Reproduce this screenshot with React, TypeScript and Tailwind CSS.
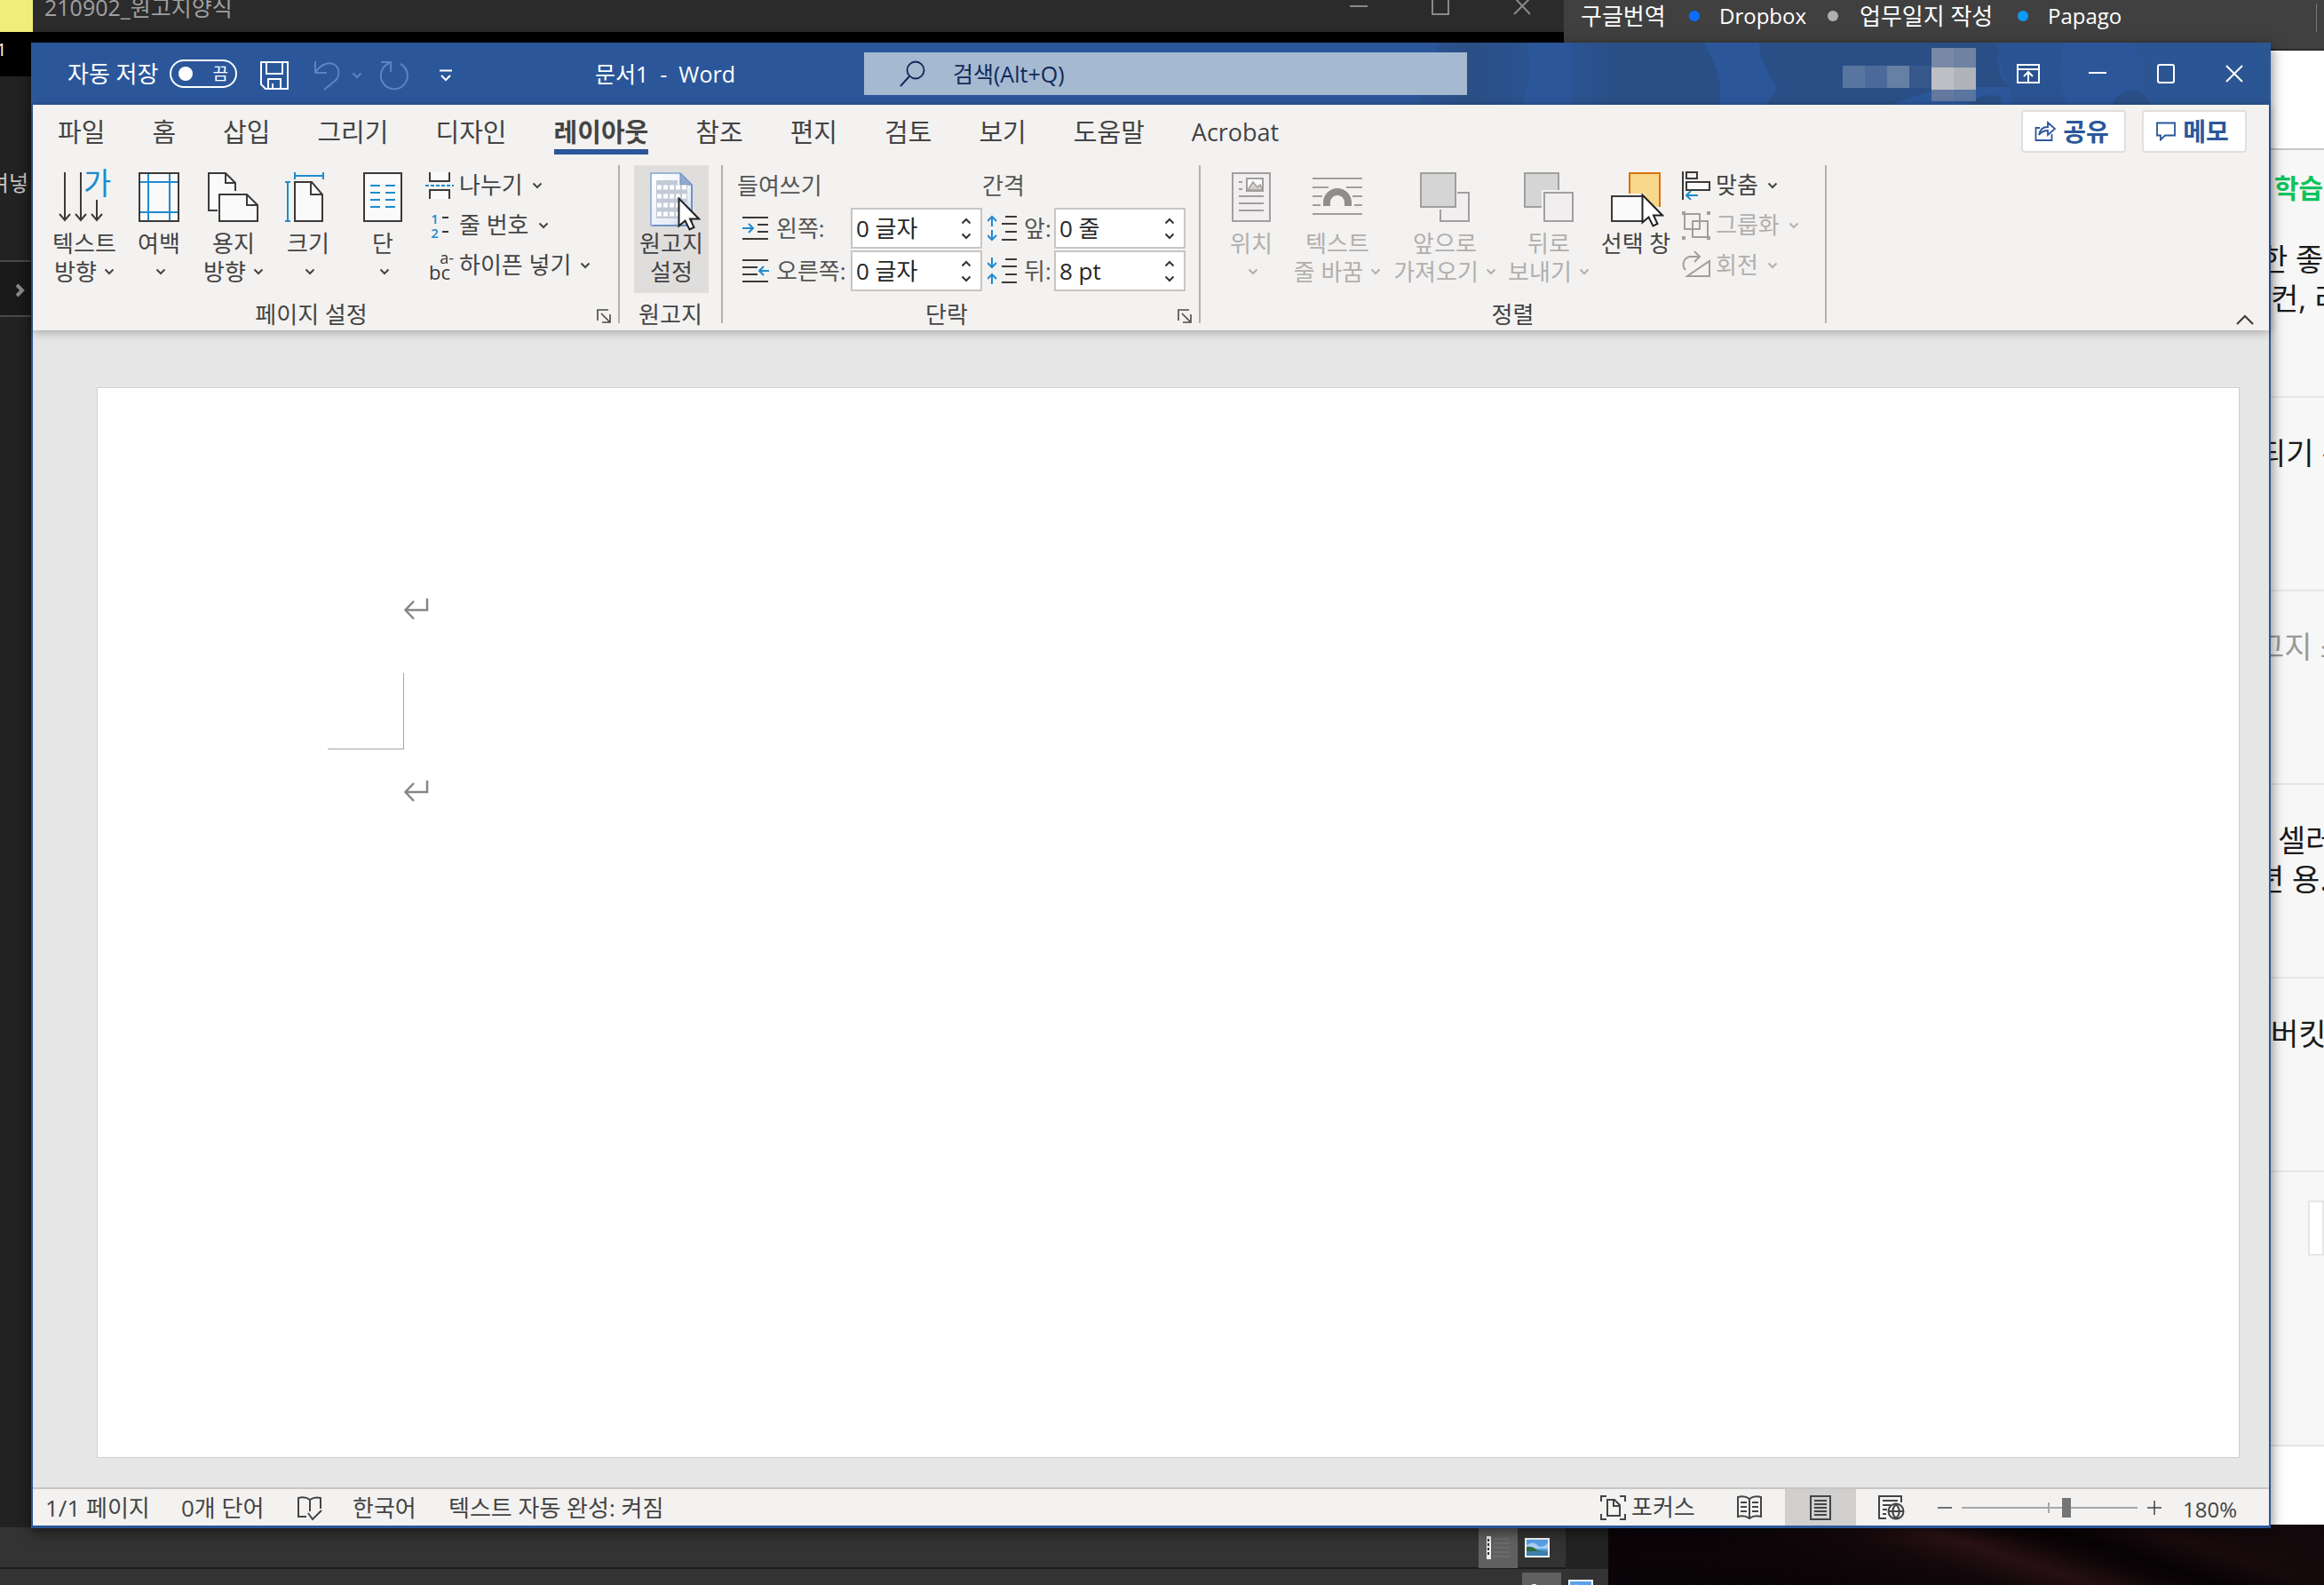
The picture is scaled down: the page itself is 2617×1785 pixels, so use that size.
import React from "react";

type IconProps = { w: number; h: number; className?: string; children: React.ReactNode };

function Icon({ w, h, className = "", children }: IconProps) {
  return (
    <svg width={w} height={h} viewBox={`0 0 ${w} ${h}`} fill="none" className={`shrink-0 ${className}`} aria-hidden="true">
      {children}
    </svg>
  );
}

const DARK = "#3b3a39";
const BLUE = "#1e8bcd";
const GREY = "#a19f9d";

function Chevron({ up = false }: { up?: boolean }) {
  return (
    <Icon w={12} h={8}>
      <path d={up ? "M1.5 6.5 6 2l4.5 4.5" : "M1.5 1.5 6 6l4.5-4.5"} stroke="currentColor" strokeWidth="2" />
    </Icon>
  );
}

function Launcher({ label }: { label: string }) {
  return (
    <button aria-label={label} className="flex w-8 justify-center pt-1">
      <Icon w={16} h={16}>
        <path d="M1 13V1h12M5 5l9 9M15 6v9H6" stroke="#4a4948" strokeWidth="1.6" />
      </Icon>
    </button>
  );
}

function TextDirectionIcon() {
  return (
    <div className="relative flex">
      <Icon w={58} h={56}>
        <path d="M7 0v54M25 0v54M43 31v23M1 47l6 7 6-7M19 47l6 7 6-7M37 47l6 7 6-7" stroke={DARK} strokeWidth="2" />
      </Icon>
      <span className="absolute -top-1 left-7 text-[34px] leading-8 text-[#1e8bcd]">가</span>
    </div>
  );
}

function MarginsIcon() {
  return (
    <Icon w={46} h={56}>
      <rect x="1" y="1" width="44" height="54" fill="#fafafa" stroke={DARK} strokeWidth="2" />
      <path d="M11 2v52M35 2v52M2 11h42M2 45h42" stroke={BLUE} strokeWidth="2" />
    </Icon>
  );
}

function OrientationIcon() {
  return (
    <Icon w={58} h={56}>
      <path d="M11 43H1V1h19l11 11v12H13v19z" fill="#fafafa" />
      <path d="M11 43H1V1h19l11 11v9M20 1v11h11" stroke={DARK} strokeWidth="2" />
      <path d="M13 25h31l12 12v18H13z" fill="#fafafa" stroke={DARK} strokeWidth="2" />
      <path d="M44 25v12h12" stroke={DARK} strokeWidth="2" />
    </Icon>
  );
}

function SizeIcon() {
  return (
    <Icon w={52} h={56}>
      <path d="M11 11h19l12 14v30H11z" fill="#fafafa" stroke={DARK} strokeWidth="2" />
      <path d="M29 11v14h13" stroke={DARK} strokeWidth="2" />
      <path d="M11 4h32M11 0v8M43 0v8M3 11v44M0 11h6M0 55h6" stroke={BLUE} strokeWidth="2" />
    </Icon>
  );
}

function ColumnsIcon() {
  return (
    <Icon w={44} h={56}>
      <rect x="1" y="1" width="42" height="54" fill="#fafafa" stroke={DARK} strokeWidth="2" />
      <path d="M8 15h11M25 15h11M8 23h11M25 23h11M8 31h11M25 31h11M8 39h11M25 39h11" stroke={BLUE} strokeWidth="2" />
    </Icon>
  );
}

function BreaksIcon() {
  return (
    <Icon w={32} h={32}>
      <path d="M5 1v10h22V1M5 31V21h22v10" fill="#fafafa" stroke={DARK} strokeWidth="2" />
      <path d="M0 16h32" stroke={BLUE} strokeWidth="2" strokeDasharray="4 2" />
    </Icon>
  );
}

function LineNumbersIcon() {
  return (
    <span className="flex w-8 items-center justify-center gap-1" aria-hidden="true">
      <span className="flex flex-col text-[15px] leading-4 font-semibold text-[#1e8bcd]">
        <span>1</span>
        <span>2</span>
      </span>
      <Icon w={7} h={32}>
        <path d="M0 7h7M0 23h7" stroke={DARK} strokeWidth="2" />
      </Icon>
    </span>
  );
}

function HyphenIcon() {
  return (
    <span className="flex w-8 flex-col text-[22px] leading-[18px] text-[#3b3a39]" aria-hidden="true">
      <span className="self-end text-[18px] leading-[14px]">a-</span>
      <span>bc</span>
    </span>
  );
}

function Pointer() {
  return (
    <Icon w={26} h={38}>
      <path d="M1.500 1.500v31l7-6 5 10 5-2.500-4.500-9.500h10z" fill="#fff" stroke="#222" strokeWidth="2" />
    </Icon>
  );
}

function ManuscriptIcon() {
  return (
    <div className="relative flex">
      <Icon w={50} h={62}>
        <defs>
          <linearGradient id="sheet" x1="0" y1="0" x2="1" y2="1">
            <stop offset="0" stopColor="#ffffff" />
            <stop offset="0.7" stopColor="#e8eef7" />
            <stop offset="1" stopColor="#a9c0e0" />
          </linearGradient>
        </defs>
        <path d="M2 1h33l13 13v46H2z" fill="url(#sheet)" stroke="#9db6d8" strokeWidth="2" />
        <path d="M35 1v13h13z" fill="#8fabd1" stroke="#6f8dba" />
        <path d="M48 14v46H4" stroke="#6f93c5" strokeWidth="2" />
        <path d="M8 9h24v5h11v38H8z" fill="#c3cad6" />
        <path d="M9 17h33M9 27h33M9 37h33M9 47h33" stroke="#fff" strokeWidth="5" strokeDasharray="5 2" />
      </Icon>
      <span className="absolute top-7 left-8">
        <Pointer />
      </span>
    </div>
  );
}

function PositionIcon() {
  return (
    <Icon w={44} h={56}>
      <rect x="1" y="1" width="42" height="54" fill="#f0eeef" stroke={GREY} strokeWidth="2" />
      <rect x="17" y="7" width="18" height="14" fill="#fafafa" stroke={GREY} strokeWidth="2" />
      <path d="M18 20l6-9 5 6 3-3 3 6z" fill="#d2d0ce" stroke={GREY} strokeWidth="1.500" />
      <path d="M8 11h4M8 19h4M8 27h28M8 35h28M8 43h28" stroke={GREY} strokeWidth="2" />
    </Icon>
  );
}

function WrapIcon() {
  return (
    <Icon w={56} h={56}>
      <path d="M0 7h56M0 17h18M38 17h18M0 27h11M45 27h11M0 37h9M47 37h9M0 47h56" stroke={GREY} strokeWidth="2" />
      <path d="M16 38v-4a12 12 0 0 1 24 0v4" stroke="#8f8e8d" strokeWidth="8" />
    </Icon>
  );
}

function ForwardIcon() {
  return (
    <Icon w={56} h={56}>
      <path d="M42 23h13v32H23V42" fill="#f0eeef" stroke={GREY} strokeWidth="2" />
      <rect x="1" y="1" width="39" height="38" fill="#d6d5d6" stroke={GREY} strokeWidth="2" />
    </Icon>
  );
}

function BackwardIcon() {
  return (
    <Icon w={56} h={56}>
      <path d="M39 20V1H1v38h19V20z" fill="#d6d5d6" />
      <path d="M39 20V1H1v38h19" stroke={GREY} strokeWidth="2" />
      <rect x="23" y="23" width="32" height="32" fill="#f0eeef" stroke={GREY} strokeWidth="2" />
    </Icon>
  );
}

function SelectionPaneIcon() {
  return (
    <div className="relative flex">
      <Icon w={56} h={56}>
        <path d="M21 24V1h34v38H38V24z" fill="#f8d98b" />
        <path d="M21 24V1h34v38" stroke="#d8730c" strokeWidth="2" />
        <rect x="1" y="27" width="35" height="28" fill="#fafafa" stroke={DARK} strokeWidth="2" />
      </Icon>
      <span className="absolute top-6 left-[34px]">
        <Pointer />
      </span>
    </div>
  );
}

function AlignIcon() {
  return (
    <Icon w={32} h={32}>
      <path d="M1 0v32" stroke={DARK} strokeWidth="2" />
      <rect x="5" y="1" width="12" height="7" stroke={DARK} strokeWidth="2" />
      <rect x="5" y="12" width="26" height="9" fill="#fafafa" stroke={DARK} strokeWidth="2" />
      <path d="M18 27H5M10 22l-5 5 5 5" stroke={BLUE} strokeWidth="2" />
    </Icon>
  );
}

function GroupIcon() {
  return (
    <Icon w={32} h={32}>
      <path d="M3 5V3h17v17H3zM12 11h17v18H12z" stroke={GREY} strokeWidth="2" />
      <path d="M0 0h4v4H0zM28 0h4v4h-4zM0 28h4v4H0zM28 28h4v4h-4z" fill={GREY} />
    </Icon>
  );
}

function RotateIcon() {
  return (
    <Icon w={32} h={32}>
      <path d="M31 11v17H6z" stroke={GREY} strokeWidth="2" />
      <path d="M4 21a9 9 0 0 1 5-15h10M14 0l6 6-6 6" stroke={GREY} strokeWidth="2" />
    </Icon>
  );
}

function IndentIcon({ right = false }: { right?: boolean }) {
  return (
    <Icon w={30} h={28}>
      <path d={right ? "M0 2h29M0 10h17M0 18h17M0 26h29" : "M0 2h29M17 10h12M17 18h12M0 26h29"} stroke={DARK} strokeWidth="2" />
      <path d={right ? "M30 14H19M24 9l-5 5 5 5" : "M0 14h12M7 9l5 5-5 5"} stroke={BLUE} strokeWidth="2" />
    </Icon>
  );
}

function SpacingIcon({ after = false }: { after?: boolean }) {
  return (
    <Icon w={33} h={30}>
      <path d="M20 2h13M16 10h17M20 19h13M16 28h17" stroke={DARK} strokeWidth="2" />
      <path
        d={after ? "M5 0v11M0 6l5 5 5-5M5 30V19M0 24l5-5 5 5" : "M5 13V2M0 7l5-5 5 5M5 17v11M0 23l5 5 5-5"}
        stroke={BLUE}
        strokeWidth="2"
      />
    </Icon>
  );
}

function Divider() {
  return <div className="mt-1 h-[178px] w-0.5 bg-[#b3b1b0]" />;
}

type BigProps = { icon: React.ReactNode; lines: [string, string?]; arrow?: boolean; width: string; disabled?: boolean; active?: boolean };

function BigButton({ icon, lines, arrow = true, width, disabled = false, active = false }: BigProps) {
  return (
    <button
      disabled={disabled}
      className={`flex h-36 flex-col items-center pt-2 leading-8 whitespace-nowrap ${width} ${active ? "bg-[#e0dedd]" : ""} ${disabled ? "text-[#b1afad]" : "text-[#444]"}`}
    >
      <span className="mb-2 flex h-14 items-start">{icon}</span>
      <span>{lines[0]}</span>
      <span className={`flex h-8 items-center gap-2 ${lines[1] ? "" : "pl-1"}`}>
        {lines[1]}
        {arrow && <Chevron />}
      </span>
    </button>
  );
}

function SmallButton({ icon, label, disabled = false }: { icon: React.ReactNode; label: string; disabled?: boolean }) {
  return (
    <button
      disabled={disabled}
      className={`flex h-[45px] items-center gap-1.5 whitespace-nowrap ${disabled ? "text-[#b1afad]" : "text-[#444]"}`}
    >
      {icon}
      <span className="mr-1">{label}</span>
      <Chevron />
    </button>
  );
}

function Group({ label, launcher, width, children }: { label: string; launcher?: string; width: string; children: React.ReactNode }) {
  return (
    <section className={`flex flex-col pt-1 ${width}`}>
      <div className="flex h-[150px] pl-4">{children}</div>
      <div className="flex h-9 items-center">
        <h2 className="flex-1 text-center text-[#444]">{label}</h2>
        {launcher && <Launcher label={launcher} />}
      </div>
    </section>
  );
}

function Spinner({ id, label, value, icon }: { id: string; label: string; value: string; icon: React.ReactNode }) {
  return (
    <div className="flex h-[46px] items-center pl-1.5">
      {icon}
      <label htmlFor={id} className="ml-2 flex-1 whitespace-nowrap text-[#555]">
        {label}
      </label>
      <div className="flex h-[46px] w-[148px] shrink-0 border-2 border-[#c8c6c4] bg-white pl-1">
        <input id={id} defaultValue={value} className="w-0 flex-1 bg-transparent text-[26px] text-[#262626] outline-none" />
        <div className="flex w-8 flex-col items-center justify-around py-1 text-[#333]">
          <button aria-label={`${label} 늘리기`}>
            <Chevron up />
          </button>
          <button aria-label={`${label} 줄이기`}>
            <Chevron />
          </button>
        </div>
      </div>
    </div>
  );
}

function TitleBar() {
  return (
    <header className="relative flex h-[70px] shrink-0 items-center overflow-hidden bg-[#2b579a] text-[25px] text-white">
      <svg className="absolute top-0 right-0" width="1000" height="70" viewBox="0 0 1000 70" aria-hidden="true">
        <defs>
          <linearGradient id="fade" x1="0" x2="1">
            <stop offset="0" stopColor="#2a4f86" stopOpacity="0.3" />
            <stop offset="0.45" stopColor="#2a4f86" />
            <stop offset="1" stopColor="#2a4f86" stopOpacity="0.5" />
          </linearGradient>
          <linearGradient id="edge" x1="0" x2="1">
            <stop offset="0" stopColor="#2a4f86" stopOpacity="0.4" />
            <stop offset="0.3" stopColor="#2a4f86" />
            <stop offset="1" stopColor="#2a4f86" />
          </linearGradient>
        </defs>
        <path d="M40 70 66 0H166L168 35 160 70z" fill="url(#fade)" />
        <path d="M215 70V0h148c14 22 22 40 18 70z" fill="url(#edge)" />
        <path d="M426 0c0 18 8 34 21 51l-14 19h140l60-20h74c-14-14-14-34-10-50z" fill="#2a4f86" />
        <path d="M660 70c12-10 20-12 38-10v10z" fill="#2a4f86" />
        <path d="M692 0h78c-6 20-8 44 2 70h-60z" fill="#2a5391" />
        <path d="M846 0c14 22 14 46 4 70h150V0z" fill="#2b5593" />
        <circle cx="845" cy="76" r="22" fill="#2a4f86" />
      </svg>
      <div className="relative flex w-full items-center">
        <div className="flex w-[633px] shrink-0 items-center pl-[39px]">
          <label htmlFor="autosave" className="w-[115px] text-[26px] whitespace-nowrap">
            자동 저장
          </label>
          <button id="autosave" role="switch" aria-checked="false" className="flex h-8 w-[76px] items-center justify-between rounded-full border-2 border-white px-2">
            <span className="size-4 rounded-full bg-white" />
            <span className="text-[19px] leading-5">끔</span>
          </button>
          <button aria-label="저장" className="mt-1 ml-[26px]">
            <Icon w={32} h={32}>
              <path d="M1 1h30v30H6l-5-5zM7 1v13h18V1M9 31V20h14v11M14 31v-6" stroke="#fff" strokeWidth="2" />
            </Icon>
          </button>
          <button aria-label="실행 취소" disabled className="mt-1 ml-7 flex items-center gap-3 text-[#5c84c2]">
            <Icon w={31} h={34}>
              <path d="M2 1v13h13M2 14C8 4 18 1 24 5s6 14-1 19L12 33" stroke="currentColor" strokeWidth="2" />
            </Icon>
            <Chevron />
          </button>
          <button aria-label="다시 실행" disabled className="mt-1 ml-5 text-[#5c84c2]">
            <Icon w={32} h={34}>
              <path d="M1 2h11v11M11 3A15 15 0 1 0 23 4" stroke="currentColor" strokeWidth="2" />
            </Icon>
          </button>
          <button aria-label="빠른 실행 도구 모음 사용자 지정" className="mt-1 ml-[34px]">
            <Icon w={16} h={14}>
              <path d="M1 1.500h14M3 7l5 5 5-5" stroke="#fff" strokeWidth="2" />
            </Icon>
          </button>
        </div>
        <h1 className="w-[303px] shrink-0 pt-0.5 whitespace-pre">문서1  -  Word</h1>
        <div className="flex h-12 w-[679px] shrink-0 items-center bg-[#a5b9d1] pl-10 text-[#10295a]">
          <Icon w={30} h={30}>
            <circle cx="18" cy="11" r="9.500" stroke="#10295a" strokeWidth="1.800" />
            <path d="M11 18 1 29" stroke="#10295a" strokeWidth="2" />
          </Icon>
          <input aria-label="검색" placeholder="검색(Alt+Q)" className="ml-[30px] flex-1 bg-transparent pt-0.5 outline-none placeholder:text-[#10295a]" />
        </div>
        <div className="ml-auto flex items-center">
          <div className="flex items-center pt-0.5" aria-hidden="true">
            <span className="mt-1 h-[25px] w-[25px] bg-[#57759f]" />
            <span className="mt-1 h-[25px] w-[25px] bg-[#4b6a99]" />
            <span className="mt-1 h-[25px] w-[25px] bg-[#677fa5]" />
            <span className="mt-1 h-[25px] w-[25px] bg-[#36588c]" />
            <span className="grid h-[60px] grid-cols-[25px_25px] grid-rows-[22px_25px_13px]">
              <span className="bg-[#7888a7]" />
              <span className="bg-[#6e82a3]" />
              <span className="bg-[#bfc0c5]" />
              <span className="bg-[#b0b3ba]" />
              <span className="bg-[#64799f]" />
              <span className="bg-[#5a769f]" />
            </span>
          </div>
          <button aria-label="리본 메뉴 표시 옵션" className="ml-[46px]">
            <Icon w={26} h={22}>
              <path d="M1 1h24v20H1zM1 6h24M13 21V9M8 14l5-5 5 5" stroke="#fff" strokeWidth="2" />
            </Icon>
          </button>
          <button aria-label="최소화" className="ml-[55px]">
            <Icon w={20} h={22}>
              <path d="M0 10h20" stroke="#fff" strokeWidth="2" />
            </Icon>
          </button>
          <button aria-label="최대화" className="ml-[57px]">
            <Icon w={20} h={22}>
              <rect x="1" y="1" width="18" height="20" rx="2" stroke="#fff" strokeWidth="2" />
            </Icon>
          </button>
          <button aria-label="닫기" className="mr-[29px] ml-[57px]">
            <Icon w={20} h={22}>
              <path d="M1 2l18 18M19 2 1 20" stroke="#fff" strokeWidth="2" />
            </Icon>
          </button>
        </div>
      </div>
    </header>
  );
}

const TABS = ["파일", "홈", "삽입", "그리기", "디자인", "레이아웃", "참조", "편지", "검토", "보기", "도움말", "Acrobat"];

function Tabs() {
  return (
    <div className="flex h-16 items-start">
      <nav className="flex gap-[53px] pl-7 text-[29px] text-[#444]">
        {TABS.map((t) => (
          <button
            key={t}
            className={
              t === "레이아웃"
                ? "flex h-14 items-center border-b-6 border-[#2b579a] pt-3 font-bold whitespace-nowrap"
                : t === "Acrobat"
                  ? "flex h-14 items-center border-b-6 border-transparent pt-3 text-[27px] whitespace-nowrap"
                  : "flex h-14 items-center border-b-6 border-transparent pt-3 whitespace-nowrap"
            }
          >
            {t}
          </button>
        ))}
      </nav>
      <div className="mt-1.5 mr-[25px] ml-auto flex gap-[18px] text-[28px] font-bold text-[#2b579a]">
        <button className="flex h-12 w-[118px] items-center justify-center gap-2 rounded-sm border-2 border-[#e1dfdd] bg-white pr-1">
          <Icon w={24} h={24}>
            <path d="M6 8H1.500v14h18v-7M5 16c1-7 6-9 10-9V2l8 7-8 7v-5c-4 0-7 1-10 5z" stroke="#2b579a" strokeWidth="1.800" />
          </Icon>
          공유
        </button>
        <button className="flex h-12 w-[118px] items-center justify-center gap-2 rounded-sm border-2 border-[#e1dfdd] bg-white pr-1">
          <Icon w={22} h={22}>
            <path d="M1 1.500h20v14H10l-5 5v-5H1z" stroke="#2b579a" strokeWidth="1.800" />
          </Icon>
          메모
        </button>
      </div>
    </div>
  );
}

function Ribbon() {
  return (
    <div className="relative z-10 shrink-0 bg-[#f3f2f1] shadow-[0_2px_10px_rgba(0,0,0,0.3)]">
      <Tabs />
      <div className="flex h-[190px] text-[26px]">
        <Group label="페이지 설정" launcher="페이지 설정 대화 상자" width="w-[659px]">
          <BigButton width="w-[84px]" icon={<TextDirectionIcon />} lines={["텍스트", "방향"]} />
          <BigButton width="w-[84px]" icon={<MarginsIcon />} lines={["여백"]} />
          <BigButton width="w-[84px]" icon={<OrientationIcon />} lines={["용지", "방향"]} />
          <BigButton width="w-[84px]" icon={<SizeIcon />} lines={["크기"]} />
          <BigButton width="w-[84px]" icon={<ColumnsIcon />} lines={["단"]} />
          <div className="flex flex-col items-start pl-1.5">
            <SmallButton icon={<BreaksIcon />} label="나누기" />
            <SmallButton icon={<LineNumbersIcon />} label="줄 번호" />
            <SmallButton icon={<HyphenIcon />} label="하이픈 넣기" />
          </div>
        </Group>
        <Divider />
        <Group label="원고지" width="w-[114px]">
          <BigButton width="w-[84px]" active arrow={false} icon={<ManuscriptIcon />} lines={["원고지", "설정"]} />
        </Group>
        <Divider />
        <Group label="단락" launcher="단락 대화 상자" width="w-[536px]">
          <div className="flex w-[276px] flex-col gap-0.5">
            <h3 className="flex h-[46px] items-center text-[#555]">들여쓰기</h3>
            <Spinner id="indent-left" label="왼쪽:" value="0 글자" icon={<IndentIcon />} />
            <Spinner id="indent-right" label="오른쪽:" value="0 글자" icon={<IndentIcon right />} />
          </div>
          <div className="flex w-[229px] flex-col gap-0.5">
            <h3 className="flex h-[46px] items-center text-[#555]">간격</h3>
            <Spinner id="space-before" label="앞:" value="0 줄" icon={<SpacingIcon />} />
            <Spinner id="space-after" label="뒤:" value="8 pt" icon={<SpacingIcon after />} />
          </div>
        </Group>
        <Divider />
        <Group label="정렬" width="w-[703px]">
          <BigButton disabled width="w-[82px]" icon={<PositionIcon />} lines={["위치"]} />
          <BigButton disabled width="w-[112px]" icon={<WrapIcon />} lines={["텍스트", "줄 바꿈"]} />
          <BigButton disabled width="w-[130px]" icon={<ForwardIcon />} lines={["앞으로", "가져오기"]} />
          <BigButton disabled width="w-[104px]" icon={<BackwardIcon />} lines={["뒤로", "보내기"]} />
          <BigButton width="w-[92px]" arrow={false} icon={<SelectionPaneIcon />} lines={["선택 창"]} />
          <div className="flex flex-col items-start pl-1.5">
            <SmallButton icon={<AlignIcon />} label="맞춤" />
            <SmallButton disabled icon={<GroupIcon />} label="그룹화" />
            <SmallButton disabled icon={<RotateIcon />} label="회전" />
          </div>
        </Group>
        <Divider />
        <button aria-label="리본 메뉴 축소" className="mt-auto mr-[17px] mb-1.5 ml-auto">
          <Icon w={20} h={12}>
            <path d="M1 11l9-9 9 9" stroke={DARK} strokeWidth="2" />
          </Icon>
        </button>
      </div>
    </div>
  );
}

function ReturnMark() {
  return (
    <Icon w={28} h={26} className="ml-[86px]">
      <path d="M26 1v13H2M11 4 1.500 14l9.500 10" stroke="#868686" strokeWidth="2.500" />
    </Icon>
  );
}

function DocumentArea() {
  return (
    <main className="flex min-h-0 flex-1 bg-[#e6e6e6] pt-16 pr-[33px] pb-[33px] pl-[72px]">
      <article className="flex flex-1 flex-col items-start border border-[#d0d0d0] bg-white pt-[236px] pl-[259px]">
        <ReturnMark />
        <div className="mt-[59px] mb-[34px] h-[86px] w-[86px] border-r border-b border-[#a6a6a6]" />
        <ReturnMark />
      </article>
    </main>
  );
}

function StatusBar() {
  return (
    <footer className="flex h-[43px] shrink-0 items-stretch border-t-2 border-[#c6c6c6] bg-[#f3f2f1] text-[26px] text-[#444]">
      <div className="flex items-center pt-0.5 pl-3.5 whitespace-nowrap">
        <button className="w-[153px] text-left">1/1 페이지</button>
        <button className="w-[131px] text-left">0개 단어</button>
        <button aria-label="맞춤법 검사" className="w-[62px]">
          <Icon w={28} h={28}>
            <path d="M14 4C10 1 5 1 1 2v21h9M14 4c4-3 8-3 12-2v12M14 4v13M12 19l5 7 10-10" stroke="#444" strokeWidth="2" />
          </Icon>
        </button>
        <button className="w-[108px] text-left">한국어</button>
        <button>텍스트 자동 완성: 켜짐</button>
      </div>
      <div className="ml-auto flex items-center">
        <button className="flex w-[140px] items-center gap-1.5 whitespace-nowrap">
          <Icon w={29} h={28}>
            <path d="M7 1H1v6M22 1h6v6M1 21v6h6M28 21v6h-6" stroke="#444" strokeWidth="2" />
            <path d="M8 5h8l6 6v12H8zM15 5v7h7" stroke="#444" strokeWidth="2" />
          </Icon>
          포커스
        </button>
        <button aria-label="읽기 모드" className="flex w-[68px] justify-center pr-3">
          <Icon w={28} h={28}>
            <path d="M14 4C10 1 5 1 1 2v22c4-1 9-1 13 2 4-3 9-3 13-2V2c-4-1-9-1-13 2zM14 4v22" stroke="#444" strokeWidth="2" />
            <path d="M4 8h7M4 13h7M4 18h7M17 8h7M17 13h7M17 18h7" stroke="#444" strokeWidth="2" />
          </Icon>
        </button>
        <button aria-label="인쇄 모양" aria-pressed="true" className="flex h-full w-20 items-center justify-center bg-[#d0cfce]">
          <Icon w={24} h={28}>
            <path d="M1 1h22v26H1zM5 6h14M5 10h14M5 14h14M5 18h14M5 22h14" stroke="#444" strokeWidth="2" />
          </Icon>
        </button>
        <button aria-label="웹 레이아웃" className="flex w-20 justify-center">
          <Icon w={30} h={28}>
            <path d="M9 26H1V1h25v7M5 6h17M5 11h9M5 16h5M5 21h4" stroke="#444" strokeWidth="2" />
            <circle cx="20" cy="18" r="8.500" stroke="#444" strokeWidth="2" />
            <path d="M12 18h16M20 10c-5 5-5 11 0 16 5-5 5-11 0-16z" stroke="#444" strokeWidth="2" />
          </Icon>
        </button>
        <button aria-label="축소" className="ml-3">
          <Icon w={16} h={16}>
            <path d="M0 8h16" stroke="#444" strokeWidth="1.500" />
          </Icon>
        </button>
        <div className="relative mx-[11px] flex items-center">
          <span className="absolute left-[97px] h-3 w-0.5 bg-[#a8a8a8]" />
          <input
            type="range"
            aria-label="확대/축소"
            min="0"
            max="100"
            defaultValue="60"
            className="relative h-6 w-[198px] appearance-none bg-transparent [&::-webkit-slider-runnable-track]:h-0.5 [&::-webkit-slider-runnable-track]:bg-[#a8a8a8] [&::-webkit-slider-thumb]:-mt-2.5 [&::-webkit-slider-thumb]:h-[22px] [&::-webkit-slider-thumb]:w-2.5 [&::-webkit-slider-thumb]:appearance-none [&::-webkit-slider-thumb]:bg-[#757575]"
          />
        </div>
        <button aria-label="확대">
          <Icon w={16} h={16}>
            <path d="M0 8h16M8 0v16" stroke="#444" strokeWidth="1.500" />
          </Icon>
        </button>
        <button className="ml-6 w-[97px] pt-1 text-left text-[24px]">180%</button>
      </div>
    </footer>
  );
}

function WordWindow() {
  return (
    <div className="absolute top-12 right-[60px] bottom-16 left-[35px] flex flex-col border-x-2 border-b-3 border-[#2b579a] bg-[#2b579a] shadow-[0_4px_14px_rgba(0,0,0,0.55)]">
      <TitleBar />
      <Ribbon />
      <DocumentArea />
      <StatusBar />
    </div>
  );
}

function EditorWindow() {
  return (
    <div className="absolute inset-y-0 left-0 flex w-[1811px] flex-col bg-[#222]">
      <div className="flex h-9 shrink-0 bg-[#2b2b2b]">
        <div className="w-[37px] bg-[#efee7c]" />
        <div className="ml-[13px] h-9 text-[25px] leading-4 whitespace-nowrap text-[#a0a0a0]">210902_원고지양식</div>
        <div className="mr-[66px] ml-auto flex items-start gap-[72px] pr-[21px] text-[#8a8a8a]">
          <Icon w={20} h={17}>
            <path d="M0 7h20" stroke="currentColor" strokeWidth="2" />
          </Icon>
          <Icon w={20} h={17}>
            <path d="M1 0v16h18V0" stroke="currentColor" strokeWidth="2" />
          </Icon>
          <Icon w={20} h={17}>
            <path d="M2-2l17 18M19-2 1 16" stroke="currentColor" strokeWidth="2" />
          </Icon>
        </div>
      </div>
      <div className="h-[50px] shrink-0 bg-black pt-2 text-[20px] leading-6 text-white">
        <span className="-ml-1">1</span>
      </div>
      <div className="flex h-[209px] w-9 shrink-0 items-center justify-end overflow-hidden border-b-2 border-[#4a4a4a] pt-8 text-[24px] whitespace-nowrap text-[#c8c8c8]">
        <span className="mr-1">여넣</span>
      </div>
      <div className="flex h-[62px] w-9 shrink-0 items-center justify-end overflow-hidden border-b-2 border-[#4a4a4a] bg-[#1a1a1a] pt-1 pr-2">
        <Icon w={12} h={16}>
          <path d="M3 2l6 6-6 6" stroke="#8a8a8a" strokeWidth="4" />
        </Icon>
      </div>
      <div className="flex-1" />
      <div className="flex h-[65px] shrink-0 flex-col bg-[#222]">
        <div className="flex h-[47px] w-[1763px] items-start justify-end border-b-2 border-[#1c1c1c] bg-[#333] pr-[18px]">
          <div className="mr-2 flex h-[46px] w-11 items-center justify-center bg-[#606060]">
            <Icon w={32} h={28}>
              <path d="M3 1h5v26H3z" fill="#eee" />
              <path d="M5 4v3M5 9v3M5 14v3M5 19v3" stroke="#333" strokeWidth="2" />
              <path d="M11 4h18M11 9h18M11 14h18M11 19h18M11 24h18" stroke="#777" />
            </Icon>
          </div>
          <PictureIcon />
        </div>
        <div className="flex flex-1 items-start justify-end overflow-hidden bg-[#333] pr-[17px]">
          <div className="mt-1 mr-2 flex h-11 w-11 justify-center bg-[#606060] pt-3">
            <Icon w={32} h={28}>
              <path d="M5 1h5v26H5z" fill="#eee" />
              <path d="M14 4h14" stroke="#777" />
            </Icon>
          </div>
          <PictureIcon />
        </div>
      </div>
    </div>
  );
}

function PictureIcon() {
  return (
    <Icon w={28} h={22} className="mt-3">
      <rect width="28" height="22" fill="#f5f8fb" />
      <rect x="2" y="2" width="24" height="18" fill="#5aa0e6" />
      <path d="M2 8q8-5 12 0t12-2v6H2z" fill="#a9d0f2" />
      <path d="M2 10q7-1 12 4l12 1v1H2z" fill="#2f6a3c" />
      <path d="M2 15h24v5H2z" fill="#3c7fae" />
    </Icon>
  );
}

function BrowserWindow() {
  return (
    <div className="absolute top-0 right-0 bottom-[68px] left-[1761px] flex flex-col overflow-hidden bg-[#f7f7f7]">
      <div className="flex h-[57px] shrink-0 items-start border-b-2 border-[#2a2a2a] bg-[#404040] pl-[19px] text-[24px] leading-9 whitespace-nowrap text-white">
        <a href="#translate" className="w-[122px] text-[26px]">구글번역</a>
        <span className="mt-3 mr-[22px] size-3 rounded-full bg-[#0a6cff]" />
        <a href="#dropbox" className="w-[122px]">Dropbox</a>
        <span className="mt-3 mr-6 size-3 rounded-full bg-[#b0b0b0]" />
        <a href="#journal" className="w-[178px] text-[26px]">업무일지 작성</a>
        <span className="mt-3 mr-[22px] size-3 rounded-full bg-[#0d9bff]" />
        <a href="#papago">Papago</a>
        <span className="mt-1 mr-2 ml-auto h-8 w-px bg-[#777]" />
      </div>
      <div className="h-[112px] shrink-0 border-b-2 border-[#c8c8c8] bg-white" />
      <div className="ml-auto flex w-20 shrink-0 flex-col text-[34px] leading-[44px] whitespace-nowrap text-[#1a1a1a]">
        <div className="h-[279px] border-b-2 border-[#e6e6e6] pt-[21px]">
          <p className="mb-9 pl-6 text-[30px] font-bold text-[#0fc35c]">학습</p>
          <p className="pl-2">한 좋은</p>
          <p className="pl-5">컨, 리</p>
        </div>
        <p className="h-[218px] border-b-2 border-[#e6e6e6] pt-10 pl-1.5">되기 위</p>
        <p className="h-[218px] border-b-2 border-[#e6e6e6] pt-10 pl-1 text-[#9a9a9a]">고지 쓰</p>
        <div className="h-[218px] border-b-2 border-[#e6e6e6] pt-10">
          <p className="pl-7">셀러</p>
          <p className="pl-1">년 용.</p>
        </div>
        <p className="h-[218px] border-b-2 border-[#e6e6e6] pt-10 pl-5">버킷</p>
        <div className="mt-8 ml-[62px] h-[62px] border-2 border-[#e6e6e6] bg-white" />
      </div>
      <div className="mt-auto h-[90px] shrink-0 border-t-2 border-[#e4e4e4] bg-white" />
    </div>
  );
}

export default function App() {
  return (
    <div className="relative h-screen min-h-[900px] overflow-hidden bg-[#0b0508] font-['Open_Sans','Noto_Sans_CJK_KR',sans-serif]">
      <div className="absolute right-0 bottom-0 left-[1811px] h-[68px] bg-[linear-gradient(184deg,transparent_0%,rgba(5,2,4,0.5)_100%),linear-gradient(198deg,#12080b_0%,#1c0c0f_22%,#070304_32%,#120709_38%,#341619_46%,#1a0b0e_56%,#0f070b_70%,#0d060a_100%)]" />
      <EditorWindow />
      <BrowserWindow />
      <WordWindow />
    </div>
  );
}
